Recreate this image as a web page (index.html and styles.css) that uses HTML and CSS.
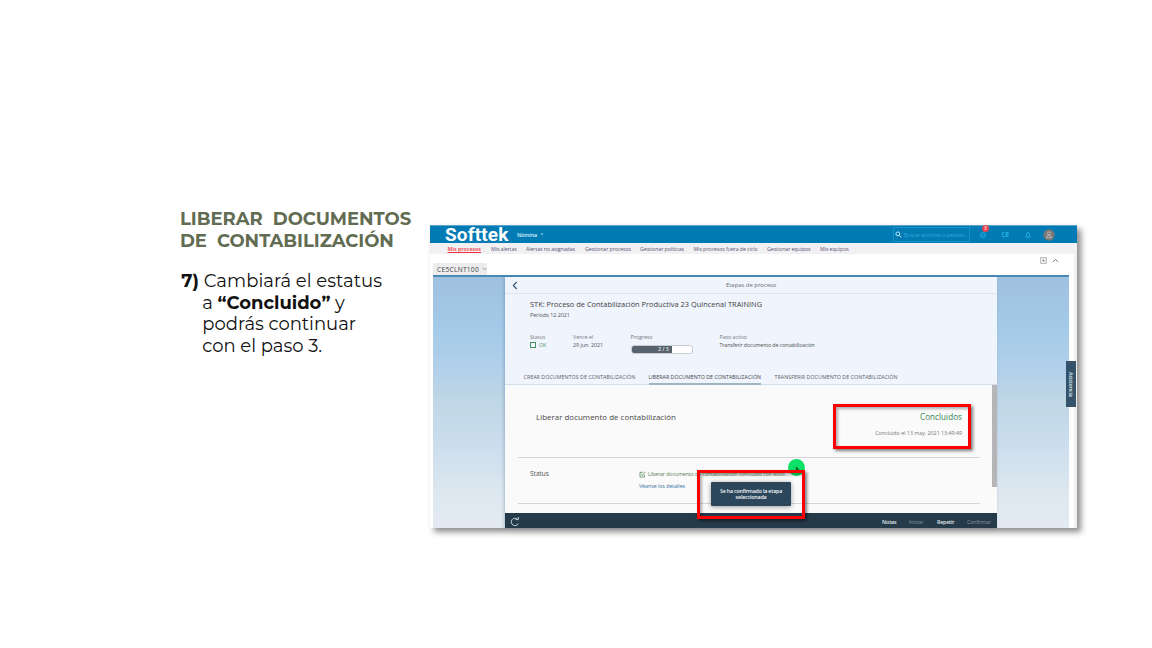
FILE: index.html
```
<!DOCTYPE html>
<html lang="es">
<head>
<meta charset="utf-8">
<title>Liberar documentos de contabilización</title>
<link rel="stylesheet" href="styles.css">
</head>
<body>
<main class="slide">
  <section class="copy">
    <h1>LIBERAR&nbsp; DOCUMENTOS<br>DE&nbsp; CONTABILIZACIÓN</h1>
    <p><span class="p1"><b>7)</b> Cambiará el estatus</span><br>a <b>“Concluido”</b> y<br>podrás continuar<br>con el paso 3.</p>
  </section>
  <section class="shot">
    <header class="top">
      <span class="brand">Softtek</span>
      <span class="module">Nómina</span>
      <svg class="caret" viewBox="0 0 4 3"><path d="M.5 .6h3L2 2.2z"/></svg>
      <div class="search"><svg viewBox="0 0 8 8"><circle cx="3.2" cy="3.2" r="2.2"/><path d="M4.9 4.9 7.3 7.2"/></svg><span class="find">Buscar acciones o person...</span></div>
      <div class="bell"><svg viewBox="0 0 8 8"><circle cx="4" cy="4" r="2.5"/><path d="m2.7 4 1 1 1.8-2"/></svg><i>3</i></div>
      <svg class="chat" viewBox="0 0 8 8"><path d="M3.5 1.5h-2v4h1v1l1-1h1M5 1.5h2v4H5zM5 3.5h2"/></svg>
      <svg class="alarm" viewBox="0 0 8 8"><path d="M1.5 6h5l-1-1V3Q5.500 1.500 4 1.500T2.500 3v2zM3.500 7h1"/></svg>
      <svg class="avatar" viewBox="0 0 12 12"><circle class="disc" cx="6" cy="6" r="5.700"/><circle cx="6" cy="4.400" r="1.500"/><path d="M3.500 8.800V8Q3.500 6.500 6 6.500T8.500 8v.8z"/></svg>
    </header>
    <nav class="nav">
      <a class="on">Mis procesos</a><a>Mis alertas</a><a>Alertas no asignadas</a><a>Gestionar procesos</a><a>Gestionar políticas</a><a>Mis procesos fuera de ciclo</a><a>Gestionar equipos</a><a>Mis equipos</a>
    </nav>
    <div class="work">
      <div class="tools">
        <div class="system"><span class="sys">CE5CLNT100</span><svg viewBox="0 0 5 4"><path d="m.8 1 1.700 1.700L4.200 1"/></svg></div>
        <svg class="expand" viewBox="0 0 7 7"><path d="M.7.7h5.600v5.600H.7z"/><path class="solid" d="M2.500 2.500h2v2h-2z"/></svg>
        <svg class="up" viewBox="0 0 7 5"><path d="m1 3.800 2.500-2.300L6 3.800"/></svg>
      </div>
      <div class="desk">
        <article class="panel">
          <div class="bar"><svg viewBox="0 0 6 9"><path d="M4.700 1 1.300 4.500 4.700 8"/></svg><span>Etapas de proceso</span></div>
          <div class="object">
            <h2>STK: Proceso de Contabilización Productiva 23 Quincenal TRAINING</h2>
            <small>Período 12.2021</small>
            <dl class="facts">
              <div><dt>Status</dt><dd class="ok"><i></i><span>OK</span></dd></div>
              <div><dt>Vence el</dt><dd>29 jun. 2021</dd></div>
              <div><dt>Progreso</dt><dd class="meter"><b>2 / 3</b></dd></div>
              <div><dt>Paso activo</dt><dd><span class="active-step">Transferir documento de contabilización</span></dd></div>
            </dl>
            <div class="tabs"><span>CREAR DOCUMENTOS DE CONTABILIZACIÓN</span><span class="sel">LIBERAR DOCUMENTO DE CONTABILIZACIÓN</span><span>TRANSFERIR DOCUMENTO DE CONTABILIZACIÓN</span></div>
          </div>
          <div class="content">
            <div class="step">
              <h3>Liberar documento de contabilización</h3>
              <div class="done"><strong>Concluidos</strong><em>Concluido el 13 may. 2021 13:49:49</em></div>
            </div>
            <div class="status">
              <span class="label">Status</span>
              <div class="links"><p><svg viewBox="0 0 7 7"><path d="M5.500 4v2H1V1.300h3M2.300 3 3.500 4.500 6.300.8"/></svg><span>Liberar documento de contabilización concluido con éxito.</span></p><a class="details">Véanse los detalles</a></div>
            </div>
          </div>
          <footer class="foot"><svg viewBox="0 0 10 10"><path d="M8.300 6.500A3.700 3.700 0 1 1 7.200 2M5.500 2.600h2.800V0"/></svg><span class="b1">Notas</span><span class="b2 dim">Iniciar</span><span class="b3">Repetir</span><span class="dim">Confirmar</span></footer>
        </article>
      </div>
    </div>
    <div class="help">Asistencia</div>
    <div class="pointer"><svg viewBox="0 0 6 8"><path d="M1 0v6l1.500-1.200L3.500 7l1.200-.6-1-2H5.500z"/></svg></div>
    <div class="toast"><span>Se ha confirmado la etapa</span><span>seleccionada</span></div>
    <div class="mark mark-done"></div>
    <div class="mark mark-toast"></div>
  </section>
</main>
</body>
</html>
```
FILE: styles.css
```
* { box-sizing: border-box; }
body { margin: 0; background: #fff; font-family: "Open Sans", "Noto Sans", sans-serif; }
h1, h2, h3, p, dl, dd { margin: 0; }
svg { display: block; flex: none; fill: none; }
span, a, h2, h3, dt, dd, em { white-space: nowrap; }

.slide { width: 1152px; height: 648px; overflow: hidden; display: grid; grid-template-columns: 250px 647px; padding: 208px 0 0 180px; }
.copy { font-family: Montserrat, Inter, sans-serif; }
.copy h1 { font-size: 18px; line-height: 22px; font-weight: 700; color: #626c52; letter-spacing: -.03px; }
.copy p { margin-top: 19px; padding-left: 22.3px; font-size: 18px; line-height: 21.6px; color: #111; letter-spacing: -.02px; }
.p1 { margin-left: -21px; letter-spacing: .03px; }

.shot { position: relative; width: 647px; height: 303px; margin-top: 17px; background: #f0f1f3; box-shadow: 4px 4px 6px rgba(0,0,0,.45); display: flex; flex-direction: column; font-size: 5.3px; }
.top { height: 18px; flex: none; display: flex; align-items: center; background: #027bb4; color: #b9e4f5; padding-left: 15px; border-top: 1px solid #5aa5c9; }
.brand { width: 72px; color: #fff; font: 700 19px/18px Roboto, "Open Sans", sans-serif; letter-spacing: .15px; }
.module { width: 22px; font-size: 5.3px; color: #dff3fb; font-weight: 600; letter-spacing: -.05px; }
.caret { width: 4px; height: 3px; fill: #8bd0ee; margin-left: 1px; }
.search { display: flex; align-items: center; width: 77px; height: 15px; margin-left: 349px; padding-left: 1px; border: 1px solid #1691c4; color: #30acd6; gap: 2px; letter-spacing: -.14px; }
.search svg { width: 7px; height: 7px; stroke: #c4edfc; stroke-width: 1.1; }
.bell { position: relative; margin-left: 9px; width: 8px; height: 8px; }
.bell svg, .chat, .alarm { width: 8px; height: 8px; stroke: #28b6e2; stroke-width: .8; }
.bell i { position: absolute; left: 3px; top: -6px; width: 7px; height: 7px; border-radius: 50%; background: #e9434d; color: #fff; font: 5px/7px "Open Sans", sans-serif; text-align: center; }
.chat { margin-left: 14px; }
.alarm { margin-left: 15px; }
.avatar { width: 12px; height: 12px; margin-left: 11px; stroke: #d5cbc6; stroke-width: .7; }
.avatar .disc { fill: #777779; stroke: none; }
.nav { height: 11px; flex: none; display: grid; grid-template-columns: 43.5px 35px 59px 55px 53.5px 73.5px 53px 40px; padding-left: 17.5px; background: #f1f1f3; color: #5d5275; line-height: 12px; letter-spacing: -.1px; }
.nav .on { color: #f0323e; text-decoration: underline; font-weight: 600; letter-spacing: .02px; }
.work { width: 640px; flex: 1; background: #fff; padding: 0 1px 0 3px; display: flex; flex-direction: column; box-shadow: 4px 0 #fff; }
.tools { height: 21px; display: flex; align-items: flex-start; }
.system { width: 54px; height: 12px; margin: 9px 553px 0 0; background: #ececee; border-radius: 2px 2px 0 0; padding-left: 4px; display: flex; align-items: center; color: #444; gap: 3px; font-size: 6.6px; letter-spacing: .29px; }
.system svg { width: 5px; height: 4px; stroke: #777; stroke-width: .7; }
.expand { width: 7px; height: 7px; margin-top: 2.5px; stroke: #999; stroke-width: .8; }
.expand .solid { fill: #888; stroke: none; }
.up { width: 7px; height: 5px; margin: 3.5px 0 0 5px; stroke: #666; stroke-width: .9; }
.desk { flex: 1; border-top: 2px solid #488bb6; background: linear-gradient(#9fc1df 0, #a3cae8 20%, #b3d0ea 38%, #bed6e5 48%, #cadded 65%, #dfe8f0 88%, #e3eaf2 100%); padding-left: 72px; }
.panel { width: 492px; height: 251px; background: #fafafb; box-shadow: -1px 0 3px rgba(60,100,150,.35); display: flex; flex-direction: column; color: #505050; }
.bar { height: 17px; flex: none; display: flex; align-items: center; background: #eff4fd; border-bottom: 1px solid #dde5ee; color: #6b6b6f; font-size: 5.9px; }
.bar svg { width: 6px; height: 9px; margin: 0 208px 0 7px; stroke: #36546f; stroke-width: 1.1; }
.object { height: 91px; flex: none; background: #eff4fd; border-bottom: 1px solid #d4e0e9; padding-left: 25px; }
.object h2 { margin-top: 5px; font-size: 7.4px; line-height: 10px; font-weight: 400; color: #3f3f42; letter-spacing: .02px; }
.object small { display: block; font-size: 5.3px; line-height: 7px; margin-top: 3px; letter-spacing: -.04px; }
.facts { display: grid; grid-template-columns: 43px 57.5px 89px 110px; margin-top: 14px; height: 20px; font-size: 5.3px; line-height: 8px; }
.facts dt { color: #77777e; letter-spacing: -.03px; }
.active-step { letter-spacing: -.12px; }
.ok { display: flex; align-items: center; gap: 3px; color: #4c9869; letter-spacing: -.1px; }
.ok i { width: 6px; height: 6px; border: 1px solid #429261; }
.meter { width: 62px; height: 9px; margin-top: 4px; border: 1px solid #c8cdd1; border-radius: 3px; overflow: hidden; background: #fff; }
.meter b { display: block; width: 41px; height: 9px; margin: -1px 0 0 -1px; background: #58636d; color: #e9ecef; font: 600 5px/9px "Open Sans", sans-serif; text-align: right; padding-right: 3px; }
.tabs { display: grid; grid-template-columns: 125px 126px 130px; margin: 19px 0 0 -6.5px; font-size: 5.3px; line-height: 10px; height: 13px; color: #5c6068; letter-spacing: .05px; }
.tabs .sel { border-bottom: 2px solid #9db6c2; width: 112.5px; color: #3e4248; letter-spacing: .03px; }
.content { height: 128px; flex: none; padding-left: 13px; position: relative; }
.content::after { content: ""; position: absolute; right: 0; top: 0; width: 5px; height: 102px; background: #b5b5b7; }
.step { width: 462px; height: 73px; border-bottom: 1.5px solid #d4d5d6; display: flex; justify-content: space-between; padding: 27px 18px 0; }
.step h3 { font-size: 7.9px; line-height: 10px; font-weight: 400; color: #484848; letter-spacing: .03px; }
.done { display: flex; flex-direction: column; align-items: flex-end; }
.done strong { font-weight: 400; font-size: 8.1px; line-height: 10px; color: #32834e; letter-spacing: .04px; }
.done em { font-style: normal; color: #777; line-height: 8px; margin-top: 7px; }
.status { width: 462px; height: 46px; border-bottom: 1.5px solid #d4d5d6; display: grid; grid-template-columns: 109px 1fr; padding: 11px 0 0 12px; }
.label { font-size: 6.5px; line-height: 10px; }
.links p { display: flex; align-items: center; gap: 2px; color: #588055; line-height: 10px; letter-spacing: -.1px; }
.links svg { width: 7px; height: 7px; stroke: #598b60; stroke-width: .8; }
.details { display: block; margin-top: 3px; color: #34719f; line-height: 9px; letter-spacing: -.04px; }
.foot { height: 15px; flex: none; background: #263b4a; display: flex; align-items: center; color: #e3e8ec; font-weight: 600; padding: 2px 0 0 5px; letter-spacing: -.12px; }
.foot svg { width: 10px; height: 10px; margin-right: 362px; stroke: #c1d5e4; stroke-width: 1; }
.foot .b1 { width: 27px; }
.foot .b2 { width: 28px; }
.foot .b3 { width: 30px; letter-spacing: -.2px; }
.foot .dim { color: #8795a0; font-weight: 400; }
.help { position: absolute; right: 1px; top: 136px; width: 10px; height: 46px; background: #34536a; color: #e1edf4; writing-mode: vertical-rl; text-align: center; line-height: 11px; font-weight: 600; letter-spacing: -.1px; }
.pointer { position: absolute; left: 358px; top: 234px; width: 17px; height: 17px; border-radius: 50%; background: #0be167; }
.pointer svg { width: 5px; height: 7px; margin: 7px 0 0 7px; fill: #062; }
.toast { position: absolute; left: 281px; top: 257px; width: 80px; height: 24px; border-radius: 1px; background: #2c475b; box-shadow: 0 1px 5px rgba(0,0,0,.4); color: #f4f8fa; font-weight: 600; line-height: 6px; padding-top: 6px; display: flex; flex-direction: column; align-items: center; letter-spacing: -.18px; }
.mark { position: absolute; border: 3px solid #fe0000; box-shadow: 2px 2px 3px rgba(0,0,0,.5), inset 2px 2px 3px rgba(0,0,0,.3); }
.mark-done { left: 403px; top: 179px; width: 138px; height: 45px; }
.mark-toast { left: 267px; top: 245px; width: 108px; height: 49px; }
```
